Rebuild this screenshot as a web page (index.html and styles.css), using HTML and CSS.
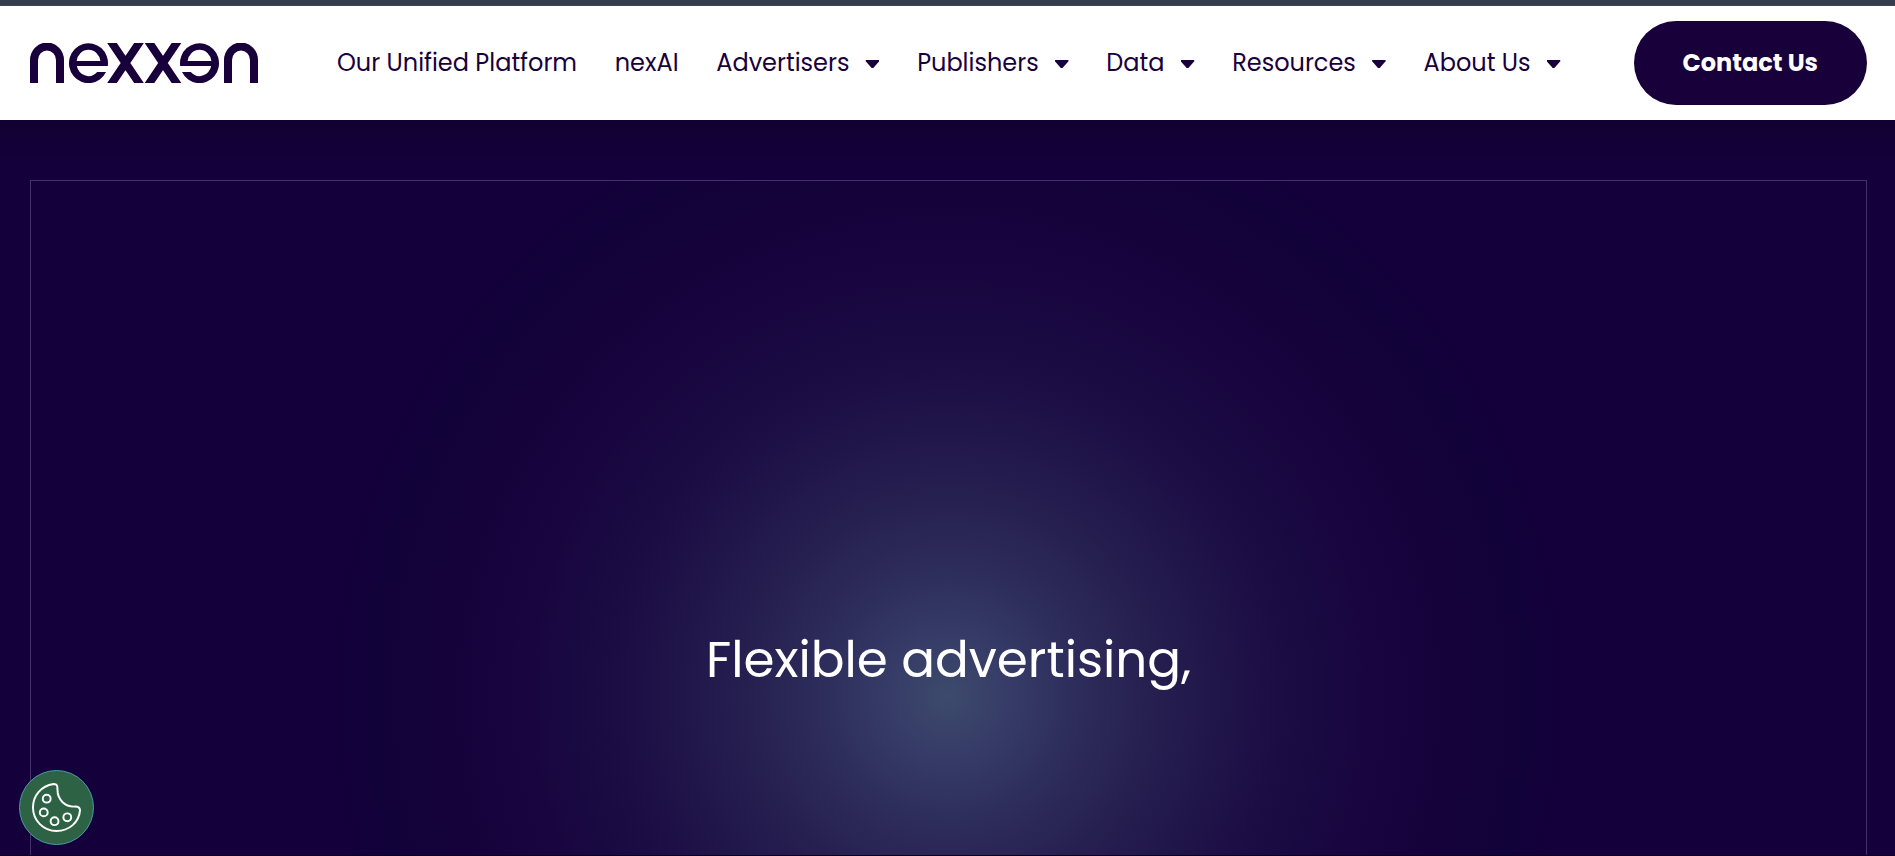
FILE: index.html
```
<!DOCTYPE html>
<html lang="en">

<head>
    <meta charset="UTF-8">
    <meta name="viewport" content="width=device-width, initial-scale=1.0">
    <title>Nexxen</title>
    <link rel="stylesheet" href="styles.css">
</head>

<body>
    <div class="top-bar"></div>

    <header class="header">
        <a class="logo" href="#" aria-label="Nexxen">
            <svg viewBox="0 0 228 40" fill="none" stroke="currentColor" stroke-width="8">
                <path d="M4 40V17a13 13.500 0 0 1 26 0v23" />
                <path class="logo-fill" d="M77.800 23A19.500 20 0 1 0 76 29H67.200A12 13 0 0 1 46.800 23zM46.600 18A12 13 0 0 1 70.400 18z" />
                <path d="M79.300 -4L111.700 44M111.700 -4L79.300 44" />
                <path d="M116.800 -4L149.200 44M149.200 -4L116.800 44" />
                <path class="logo-fill" d="M150.200 23A19.500 20 0 1 1 152 29H160.800A12 13 0 0 0 181.200 23zM181.400 18A12 13 0 0 0 157.600 18z" />
                <path d="M198 40V17a13 13.500 0 0 1 26 0v23" />
            </svg>
        </a>

        <nav class="nav">
            <a href="#">Our Unified Platform</a>
            <a href="#">nexAI</a>
            <a class="has-menu" href="#">Advertisers</a>
            <a class="has-menu" href="#">Publishers</a>
            <a class="has-menu" href="#">Data</a>
            <a class="has-menu" href="#">Resources</a>
            <a class="has-menu" href="#">About Us</a>
        </nav>

        <a class="contact" href="#">Contact Us</a>
    </header>

    <main class="hero">
        <section class="stage">
            <h1>Flexible advertising,</h1>
        </section>
    </main>

    <button class="cookie" type="button" aria-label="Cookie settings">
        <svg viewBox="0 0 50 50" fill="none" stroke="currentColor" stroke-width="2">
            <path d="M22 1C9 3 1 13 1 25a24 24 0 0 0 24 24c13 0 23-9 24-21c0-3-2-4-5-4C34 25 26 17 26 7c0-4 0-6-4-6z" />
            <circle cx="15" cy="16" r="4" />
            <circle cx="12" cy="30" r="4" />
            <circle cx="23" cy="39" r="4" />
            <circle cx="36" cy="35" r="4" />
        </svg>
    </button>
</body>

</html>
```
FILE: styles.css
```
* {
    box-sizing: border-box;
}

body {
    margin: 0;
    height: 100vh;
    display: flex;
    flex-direction: column;
    overflow: hidden;
    border-bottom: 1px solid #0c0024;
    background-color: #14003a;
    color: #18003a;
    font-family: Poppins, Inter, "Liberation Sans", sans-serif;
}

a {
    color: inherit;
    text-decoration: none;
}

.top-bar {
    flex: none;
    height: 6px;
    background-color: #343c50;
    border-bottom: 1px solid #414150;
}

/* Header */
.header {
    flex: none;
    display: flex;
    align-items: center;
    padding: 15px 28px 15px 30px;
    background-color: #fff;
}

.logo {
    flex: none;
    width: 228px;
    height: 40px;
}

.logo svg {
    display: block;
    width: 100%;
    height: 100%;
}

.logo-fill {
    fill: currentColor;
    fill-rule: evenodd;
    stroke: none;
}

.nav {
    flex: 1;
    display: flex;
    justify-content: space-between;
    margin: 0 73px 0 79px;
    font-size: 24px;
    line-height: 36px;
    white-space: nowrap;
}

.has-menu {
    display: flex;
    align-items: center;
    gap: 16px;
}

/* drop-down arrow */
.has-menu::after {
    content: "";
    width: 14px;
    height: 8px;
    margin-top: 2px;
    background-color: currentColor;
    clip-path: polygon(4% 0, 96% 0, 100% 14%, 56% 100%, 44% 100%, 0 14%);
}

.contact {
    flex: none;
    padding: 24px 49px;
    border-radius: 42px;
    background-color: #18003a;
    color: #fff;
    font-size: 24px;
    font-weight: 700;
    line-height: 36px;
}

/* Hero */
.hero {
    flex: 1;
    min-height: 0;
    padding: 60px 28px 0 30px;
    overflow: hidden;
    background: linear-gradient(#120032, #14003a 40px);
}

.stage {
    display: flex;
    align-items: center;
    justify-content: center;
    aspect-ratio: 16 / 9;
    padding-bottom: 74px;
    border: 1px solid #44316a;
    background: radial-gradient(circle, #3d4a6c 0, #363c67 60px, #2d2c5b 130px, #251e4f 210px, #1e1147 300px, #190a42 370px, #19053f 430px, #16023b 500px, #12023a 580px, #14003a 620px);
}

.stage h1 {
    margin: 0;
    color: #fff;
    font-size: 50px;
    font-weight: 400;
    line-height: 64px;
}

/* Cookie button */
.cookie {
    position: fixed;
    left: 19px;
    bottom: 11px;
    width: 75px;
    height: 75px;
    padding: 12px;
    border: 1px solid #4c9aa8;
    border-radius: 50%;
    background-color: #2d6344;
    color: #fff;
    cursor: pointer;
}

.cookie svg {
    display: block;
    width: 100%;
    height: 100%;
}

@media (max-width: 1500px) {
    .nav {
        margin: 0 30px;
        font-size: 16px;
    }
}
```
